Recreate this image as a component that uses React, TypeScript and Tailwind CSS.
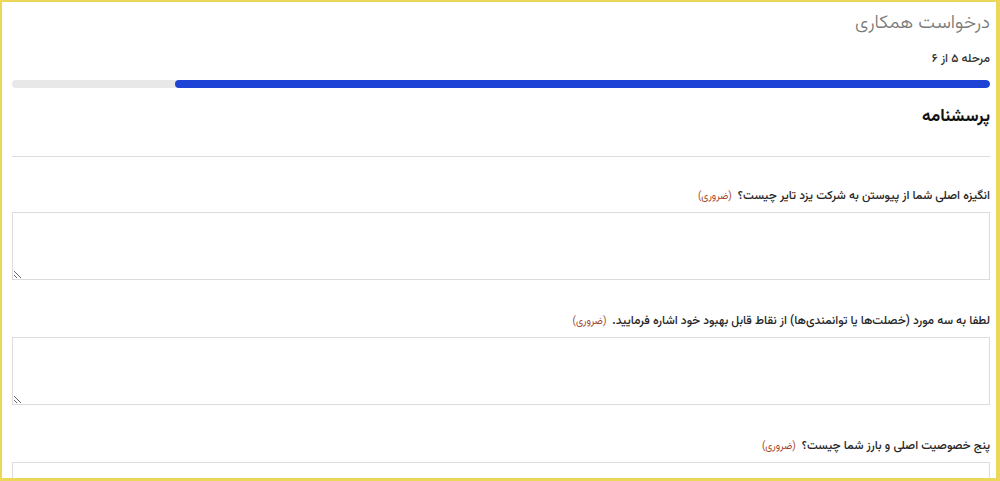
const font = "font-['Vazirmatn','Noto_Sans_Arabic','Noto_Naskh_Arabic','DejaVu_Sans',sans-serif]";

const questions = [
  "انگیزه اصلی شما از پیوستن به شرکت یزد تایر چیست؟",
  "لطفا به سه مورد (خصلت‌ها یا توانمندی‌ها) از نقاط قابل بهبود خود اشاره فرمایید.",
  "پنج خصوصیت اصلی و بارز شما چیست؟",
];

function Question({ text, first }: { text: string; first?: boolean }) {
  return (
    <div className={first ? "mt-[29px]" : "mt-[31px]"}>
      <label className="block h-5 leading-5 text-[12px] font-medium text-[#262626]">
        {text}
        <span className="mr-1.5 text-[10px] font-normal text-[#a3452c]">(ضروری)</span>
      </label>
      <textarea className="mt-[6px] block w-full h-[68px] border border-[#dcdcdc] bg-white outline-none" />
    </div>
  );
}

export default function App() {
  return (
    <div className="w-[1000px] h-[481px] overflow-hidden bg-white border-[#ecd858] border-t-2 border-l-2 border-r-4 border-b-[3px]">
      <div dir="rtl" className={`${font} pr-[6px] pl-[10px] pt-[8px]`}>
        <h1 className="h-7 leading-7 text-[19px] font-light text-[#7a7a7a]">درخواست همکاری</h1>
        <div className="mt-[11px] h-5 leading-5 text-[12px] font-medium text-[#333]">مرحله ۵ از ۶</div>
        <div className="mt-[11px] h-2 rounded-full bg-[#e8e8e8] overflow-hidden">
          <div className="h-full w-5/6 rounded-full bg-[#1c42d6]" />
        </div>
        <h2 className="mt-[15px] h-7 leading-7 text-[17px] font-bold text-[#111]">پرسشنامه</h2>
        <hr className="mt-[25px] border-0 border-t border-[#dddddd]" />
        {questions.map((q, i) => (
          <Question key={i} text={q} first={i === 0} />
        ))}
      </div>
    </div>
  );
}
